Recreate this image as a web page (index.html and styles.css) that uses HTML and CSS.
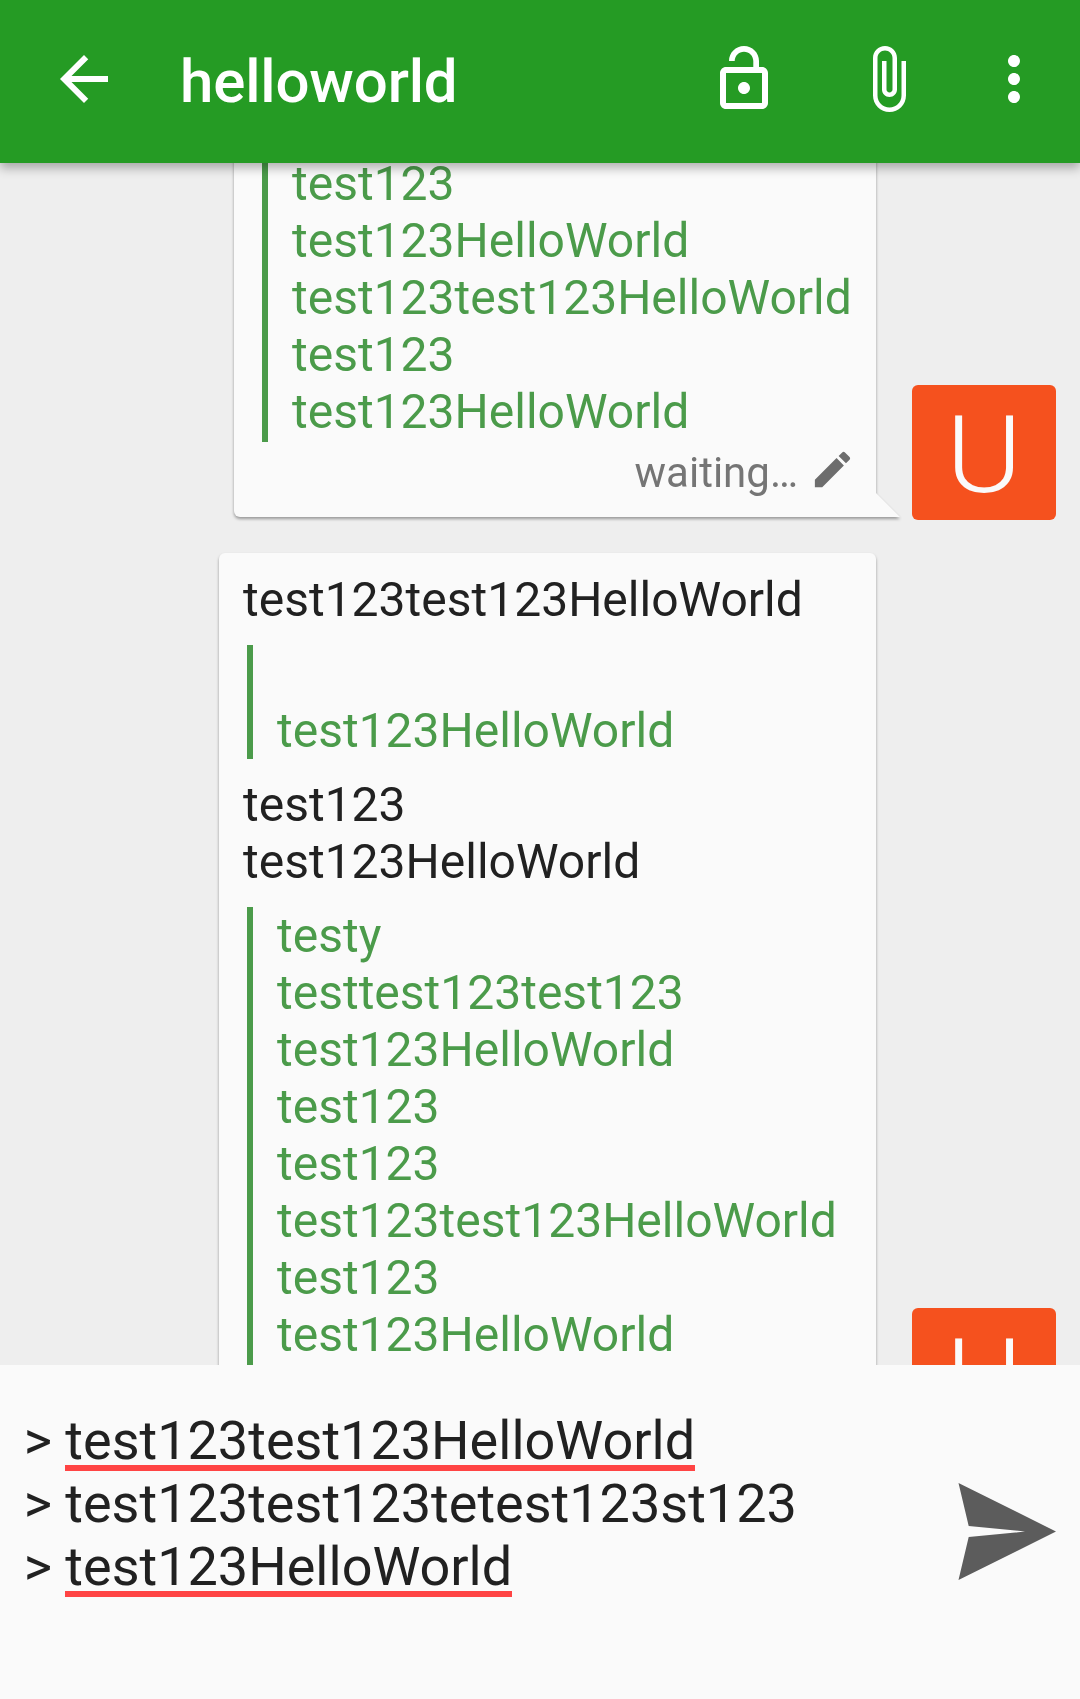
FILE: index.html
```html
<!DOCTYPE html>
<html lang="en">
<head>
<meta charset="utf-8">
<title>helloworld</title>
<link rel="stylesheet" href="styles.css">
</head>
<body>
<div class="app">
  <header class="toolbar">
    <svg class="icon" viewBox="0 0 24 24"><path d="M20 11H7.83l5.59-5.59L12 4l-8 8 8 8 1.41-1.41L7.83 13H20v-2z"/></svg>
    <h1 class="title">helloworld</h1>
    <svg class="icon" viewBox="0 0 24 24"><path d="M12 17c1.1 0 2-.9 2-2s-.9-2-2-2-2 .9-2 2 .9 2 2 2zm6-9h-1V6c0-2.76-2.24-5-5-5S7 3.24 7 6h1.9c0-1.71 1.39-3.1 3.1-3.1 1.71 0 3.1 1.39 3.1 3.1v2H6c-1.1 0-2 .9-2 2v10c0 1.1.9 2 2 2h12c1.1 0 2-.9 2-2V10c0-1.1-.9-2-2-2zm0 12H6V10h12v10z"/></svg>
    <svg class="icon icon-attach" viewBox="0 0 24 24"><path d="M16.5 6v11.5c0 2.21-1.79 4-4 4s-4-1.79-4-4V5c0-1.38 1.12-2.5 2.5-2.5s2.5 1.12 2.5 2.5v10.5c0 .55-.45 1-1 1s-1-.45-1-1V6H10v9.5c0 1.38 1.12 2.5 2.5 2.5s2.5-1.12 2.5-2.5V5c0-2.21-1.79-4-4-4S7 2.79 7 5v12.5c0 3.04 2.46 5.5 5.5 5.5s5.5-2.46 5.5-5.5V6h-1.5z"/></svg>
    <svg class="icon icon-more" viewBox="0 0 24 24"><path d="M12 8c1.1 0 2-.9 2-2s-.9-2-2-2-2 .9-2 2 .9 2 2 2zm0 2c-1.1 0-2 .9-2 2s.9 2 2 2 2-.9 2-2-.9-2-2-2zm0 6c-1.1 0-2 .9-2 2s.9 2 2 2 2-.9 2-2-.9-2-2-2z"/></svg>
  </header>

  <main class="messages">
    <div class="row">
      <div class="bubble bubble-first">
        <blockquote class="quote quote-last">
          <p>test123</p>
          <p>test123HelloWorld</p>
          <p>test123test123HelloWorld</p>
          <p>test123</p>
          <p>test123HelloWorld</p>
        </blockquote>
        <div class="status">
          <span>waiting…</span>
          <svg class="pencil" viewBox="0 0 24 24"><path d="M3 17.25V21h3.75L17.81 9.94l-3.75-3.75L3 17.25zM20.71 7.04c.39-.39.39-1.02 0-1.41l-2.34-2.34c-.39-.39-1.02-.39-1.41 0l-1.83 1.83 3.75 3.75 1.83-1.83z"/></svg>
        </div>
        <span class="tail"></span>
      </div>
      <div class="avatar"><span class="initial">U</span></div>
    </div>

    <div class="row">
      <div class="bubble bubble-second">
        <p>test123test123HelloWorld</p>
        <blockquote class="quote">
          <p>&nbsp;</p>
          <p>test123HelloWorld</p>
        </blockquote>
        <p>test123</p>
        <p>test123HelloWorld</p>
        <blockquote class="quote quote-last">
          <p>testy</p>
          <p>testtest123test123</p>
          <p>test123HelloWorld</p>
          <p>test123</p>
          <p>test123</p>
          <p>test123test123HelloWorld</p>
          <p>test123</p>
          <p>test123HelloWorld</p>
        </blockquote>
      </div>
      <div class="avatar"><span class="initial">U</span></div>
    </div>
  </main>

  <footer class="composer">
    <div class="input">
      <p>&gt; <span class="misspelled">test123test123HelloWorld</span></p>
      <p>&gt; test123test123tetest123st123</p>
      <p>&gt; <span class="misspelled">test123HelloWorld</span></p>
    </div>
    <svg class="send" viewBox="0 0 98 98"><path d="M.5 0 98 48.5.5 97 10.7 54 67 48.5 10.7 43z"/></svg>
  </footer>
</div>
</body>
</html>
```
FILE: styles.css
```css
* { box-sizing: border-box; }
body, h1, p, blockquote { margin: 0; }

body {
  font-family: Roboto, sans-serif;
  color: #212121;
}

.app {
  display: flex;
  flex-direction: column;
  width: 1080px;
  height: 1699px;
  overflow: hidden;
  background: #eee;
}

/* Toolbar */
.toolbar {
  position: relative;
  z-index: 1;
  display: flex;
  flex: none;
  align-items: center;
  height: 163px;
  padding: 0 30px 5px 48px;
  background: #259b24;
  box-shadow: 0 5px 10px rgba(0, 0, 0, .3);
}
.icon {
  flex: none;
  width: 72px;
  height: 72px;
  fill: #fff;
}
.icon-attach { margin-left: 72px; }
.icon-more { margin-left: 54px; }
.title {
  flex: 1;
  margin-left: 60px;
  padding-top: 6px;
  font-size: 60px;
  font-weight: 500;
  line-height: 70px;
  letter-spacing: -.15px;
  color: #fff;
}

/* Conversation */
.messages {
  display: flex;
  flex: none;
  flex-direction: column;
  gap: 33px;
  height: 1202px;
  overflow: hidden;
}
.row {
  display: flex;
  flex: none;
  justify-content: flex-end;
  align-items: flex-end;
  gap: 36px;
  padding-right: 24px;
}
.bubble {
  position: relative;
  margin-bottom: 3px;
  padding: 0 24px;
  border-radius: 6px;
  background: #fafafa;
  filter: drop-shadow(0 2px 1.5px rgba(0, 0, 0, .36));
  font-size: 48px;
  line-height: 57px;
  white-space: nowrap;
}
.bubble-first {
  width: 642px;
  height: 362px;
  margin-top: -8px;
  border-radius: 0 0 0 6px;
}
.bubble-second {
  width: 657px;
  height: 887px;
  padding-top: 18px;
}
.quote {
  margin: 17px 0 17px 4px;
  padding-left: 24px;
  border-left: 6px solid #4b9b4a;
  color: #4b9b4a;
}
.quote-last { padding-bottom: 2px; }
.bubble-first .quote { margin: 0 0 0 4px; }

.status {
  display: flex;
  justify-content: flex-end;
  align-items: center;
  height: 61px;
  font-size: 42px;
  color: #757575;
}
.pencil {
  width: 47px;
  height: 47px;
  margin: -7px -4px 0 11px;
  fill: #6d6d6d;
}
.tail {
  position: absolute;
  right: -24px;
  bottom: 0;
  width: 24px;
  height: 24px;
  background: #fafafa;
  clip-path: polygon(0 0, 100% 100%, 0 100%);
}
.avatar {
  flex: none;
  width: 144px;
  height: 135px;
  border-radius: 6px;
  background: #f5511e;
  color: #fafafa;
  font-size: 108px;
  font-weight: 300;
  line-height: 140px;
  text-align: center;
}
.initial {
  display: block;
  transform: scaleX(1.07);
}

/* Message entry */
.composer {
  display: flex;
  flex: 1;
  justify-content: space-between;
  align-items: flex-start;
  padding: 44px 24px 0 23.7px;
  background: #fafafa;
}
.input {
  font-size: 54px;
  line-height: 63px;
  white-space: nowrap;
}
.misspelled {
  background: linear-gradient(#ff4444, #ff4444) left 0 bottom 1px / 100% 6px no-repeat;
}
.send {
  width: 98px;
  height: 98px;
  margin-top: 74px;
  fill: #5c5c5c;
}
```
